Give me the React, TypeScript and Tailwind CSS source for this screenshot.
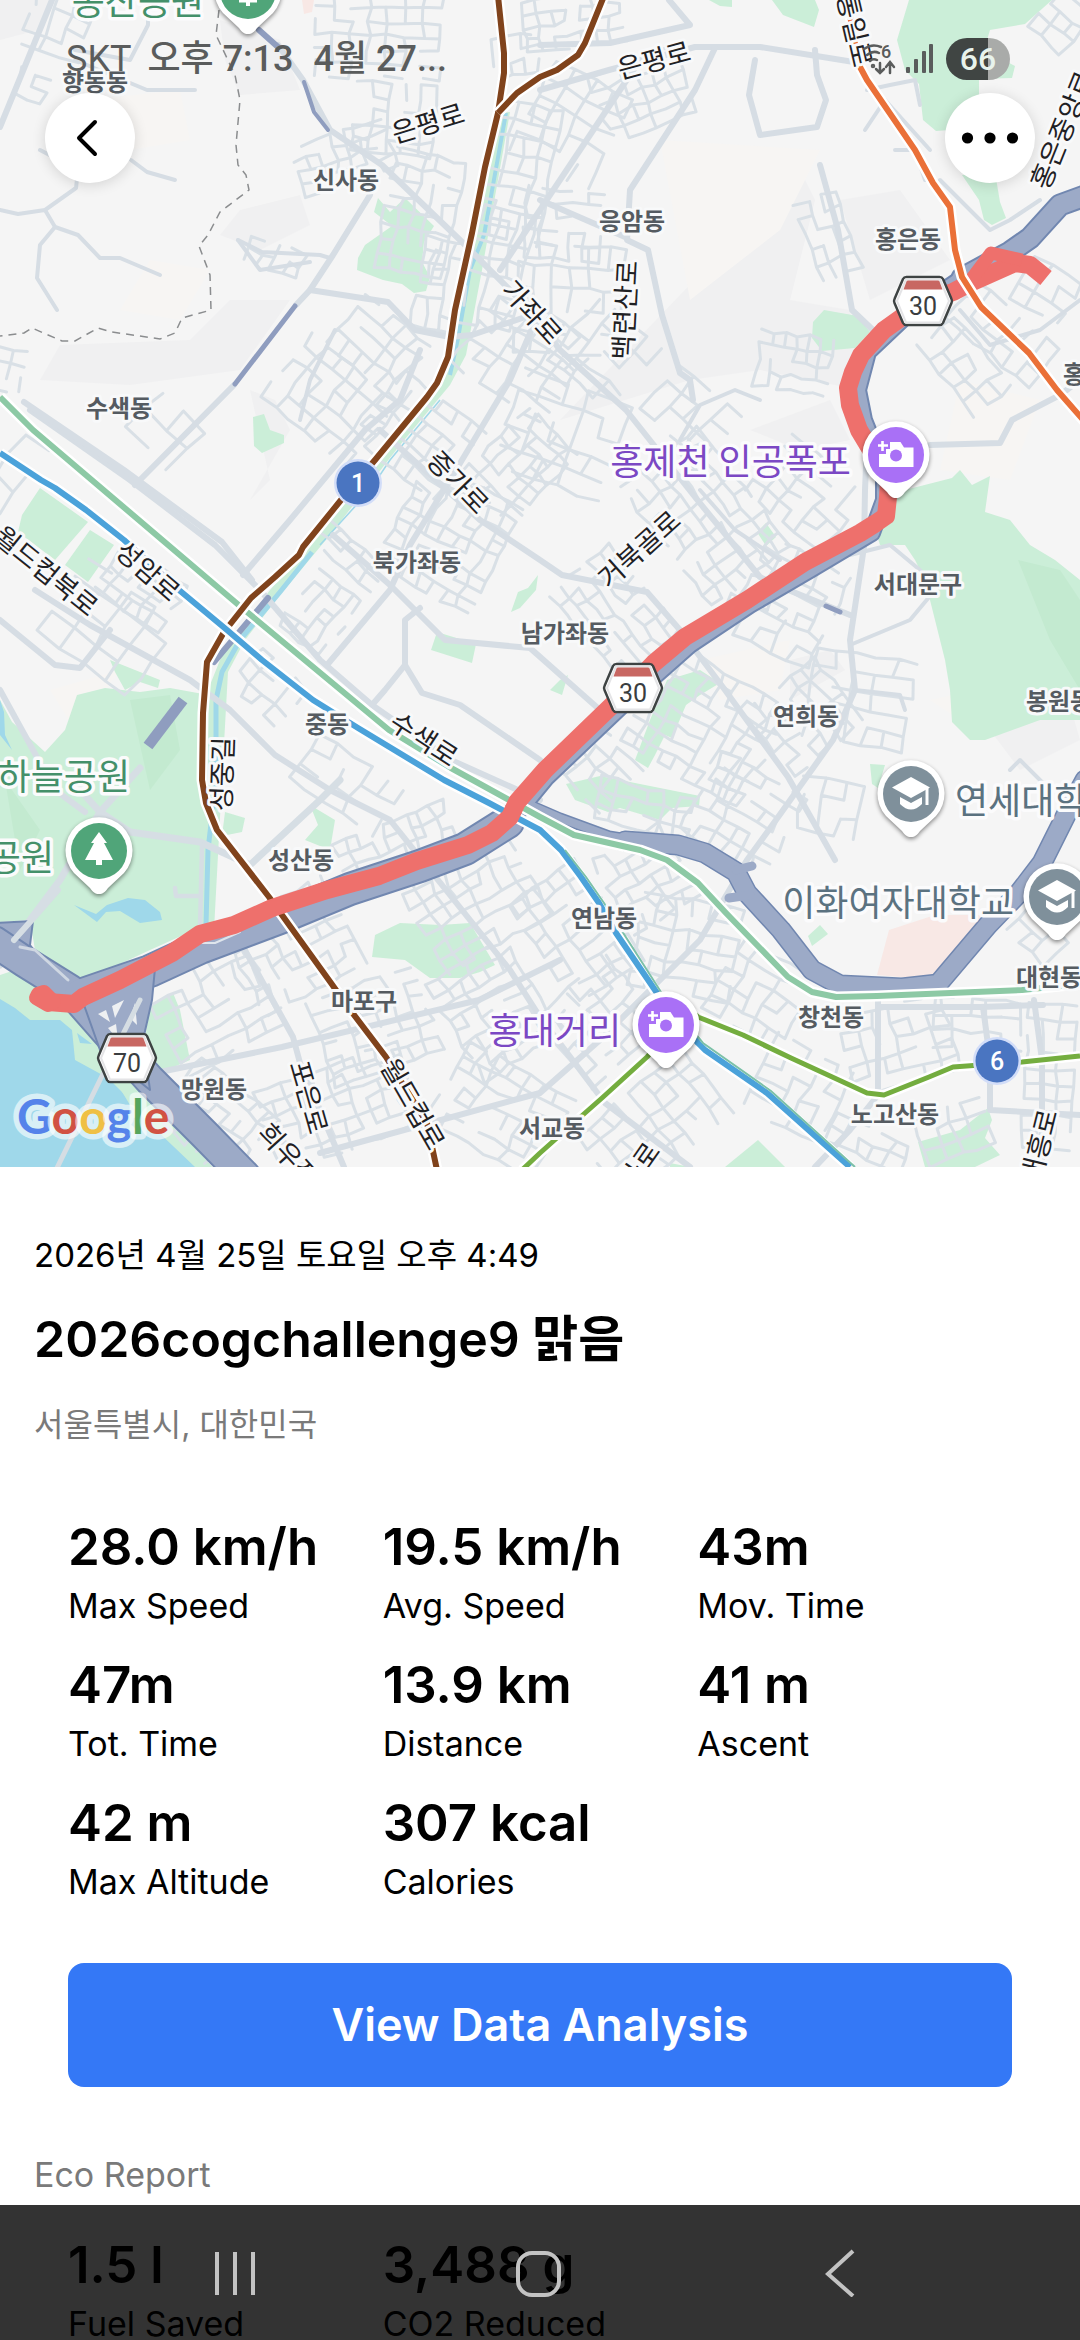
import type { ReactNode } from 'react';

type Point = { x: number; y: number };

const stats = [
  { value: '28.0 km/h', label: 'Max Speed' },
  { value: '19.5 km/h', label: 'Avg. Speed' },
  { value: '43m', label: 'Mov. Time' },
  { value: '47m', label: 'Tot. Time' },
  { value: '13.9 km', label: 'Distance' },
  { value: '41 m', label: 'Ascent' },
  { value: '42 m', label: 'Max Altitude' },
  { value: '307 kcal', label: 'Calories' },
];

const ecoStats = [
  { value: '1.5 l', label: 'Fuel Saved' },
  { value: '3,488 g', label: 'CO2 Reduced' },
];

// cx, cy, width, height, angle, column step, row step
const blocks = [
  [62, 30, 70, 60, 20, 20, 14],
  [35, 95, 44, 40, 25, 16, 14],
  [385, 30, 140, 100, 2, 18, 14],
  [350, 160, 110, 60, -18, 14, 13],
  [400, 120, 90, 70, 5, 16, 14],
  [420, 215, 70, 120, 12, 14, 15],
  [575, 25, 100, 60, -8, 14, 13],
  [520, 60, 50, 50, -10, 14, 13],
  [645, 100, 90, 80, -22, 15, 14],
  [570, 130, 90, 110, 28, 22, 20],
  [520, 180, 70, 150, 12, 16, 17],
  [565, 230, 80, 80, 4, 15, 14],
  [570, 300, 110, 110, 4, 18, 22],
  [500, 270, 60, 120, 12, 18, 17],
  [605, 360, 90, 90, 40, 20, 20],
  [520, 360, 110, 110, 35, 18, 16],
  [440, 290, 46, 100, 12, 14, 15],
  [380, 350, 90, 70, 40, 16, 16],
  [330, 400, 110, 80, 40, 18, 16],
  [15, 375, 40, 50, 8, 14, 14],
  [275, 262, 60, 34, 20, 14, 13],
  [830, 240, 44, 90, -20, 14, 16],
  [795, 365, 75, 60, 8, 12, 14],
  [1000, 340, 110, 60, 40, 18, 16],
  [1050, 300, 70, 60, 30, 18, 16],
  [1060, 30, 50, 60, 40, 14, 16],
  [960, 370, 90, 60, 50, 18, 16],
  [420, 440, 110, 90, 38, 17, 14],
  [450, 540, 110, 120, 28, 15, 13],
  [515, 470, 70, 110, 45, 14, 14],
  [345, 560, 80, 40, 40, 16, 14],
  [170, 440, 80, 60, 45, 30, 26],
  [320, 620, 60, 80, 38, 13, 14],
  [560, 440, 110, 110, 20, 22, 20],
  [690, 420, 90, 70, 42, 20, 20],
  [700, 520, 150, 110, 52, 15, 14],
  [620, 620, 130, 80, 50, 14, 13],
  [810, 500, 110, 80, 40, 16, 15],
  [800, 590, 100, 70, 28, 15, 14],
  [770, 640, 110, 50, 25, 20, 18],
  [860, 700, 100, 90, 10, 20, 18],
  [705, 730, 140, 120, 30, 15, 14],
  [800, 720, 80, 100, 50, 16, 15],
  [600, 770, 70, 60, 45, 16, 15],
  [110, 630, 120, 90, 36, 28, 22],
  [140, 590, 80, 60, 36, 13, 14],
  [20, 480, 50, 80, 38, 28, 26],
  [270, 690, 70, 50, 42, 16, 16],
  [350, 790, 110, 60, 35, 20, 18],
  [400, 850, 120, 60, -22, 13, 14],
  [215, 1010, 110, 100, -28, 18, 16],
  [300, 950, 120, 110, -28, 14, 14],
  [380, 1030, 120, 100, -20, 16, 15],
  [340, 1110, 150, 90, -20, 15, 14],
  [215, 1120, 100, 80, 40, 14, 13],
  [475, 900, 120, 110, -30, 15, 15],
  [500, 1010, 100, 120, -32, 15, 14],
  [500, 1110, 120, 90, 30, 17, 15],
  [580, 930, 90, 120, -35, 16, 15],
  [650, 880, 80, 90, -30, 15, 14],
  [690, 950, 110, 100, 10, 17, 16],
  [600, 1020, 100, 90, -42, 16, 15],
  [660, 1120, 150, 80, -40, 17, 16],
  [760, 1000, 90, 90, 30, 17, 16],
  [650, 815, 110, 50, 15, 16, 14],
  [745, 815, 100, 90, 30, 16, 15],
  [830, 810, 60, 60, 10, 20, 18],
  [800, 1090, 90, 80, 28, 17, 16],
  [900, 1050, 110, 90, -15, 18, 16],
  [980, 1030, 90, 60, 3, 17, 16],
  [1055, 1080, 60, 150, 3, 16, 16],
  [960, 1130, 80, 50, -20, 17, 16],
  [870, 1150, 90, 40, 25, 16, 15],
  [1050, 930, 60, 60, -45, 18, 17],
];

const majorRoads = [
  '52,0 0,127',
  '278,45 303,80 330,130 382,165 460,240 530,310 560,350 626,410 695,497 760,577 781,587 850,615',
  '370,195 333,255 310,290 296,305',
  '234,385 135,485',
  '310,290 388,302 415,330 450,337 472,335 540,312',
  '540,90 609,70 695,47 760,47 860,63',
  '540,45 610,43 690,25 669,0',
  '715,48 695,90 630,190 627,240 648,250 662,315 680,373 690,380 693,400',
  '755,60 749,95 760,135 817,127 826,100 817,75 815,50',
  '640,60 580,150 500,270',
  '540,200 625,237',
  '30,410 130,480 215,545 260,590 320,660 372,705 451,760 540,800',
  '24,402 124,470 222,542 252,580',
  '35,590 90,625 190,680 230,710 275,755 330,790 390,820 430,870 510,970 540,1017 605,1103 690,1167',
  '243,575 290,520 365,430 400,400 420,350',
  '327,665 390,590 410,545 450,480 510,380 540,310',
  '333,535 390,585 445,640 530,648 600,710',
  '372,705 385,690 405,665 405,620 420,608',
  '405,665 422,693 460,705 540,760',
  '380,430 480,520 540,560 562,575 647,592 680,630 725,690 788,777 835,860',
  '868,420 865,490 864,547 850,640 855,690 833,740 781,813 747,860 700,940 600,1040 540,1093 320,1153',
  '930,445 1000,443 1012,420 1060,395 1080,380',
  '241,943 293,1037 300,1063 344,1167',
  '155,1073 282,1047 479,1000 560,960',
  '878,1000 878,1095 850,1130 815,1167',
  '880,1007 980,1007 1043,1005',
  '983,1007 990,1060 990,1110 1080,1115',
  '1034,1000 1042,1060 1042,1167',
  '0,620 55,665 80,668 110,630',
  '0,690 55,790 85,812',
  '820,165 838,230 845,270 852,310 873,330',
];

const minorRoads = [
  '0,210 18,214 45,210 76,188 78,170 40,150',
  '45,210 55,227 78,235 100,258 120,258 160,275',
  '55,227 40,245 37,278 57,310',
  '131,160 147,172 175,180',
  '75,50 130,60 148,25 148,0',
  '75,60 147,90 195,90',
  '238,240 262,252 320,255 330,258',
  '238,240 260,270 310,262',
  '335,330 310,380 300,420',
  '867,90 890,85 915,80 920,105',
  '865,130 885,100 930,150',
  '895,150 915,150 925,180',
  '940,180 990,230 1010,220 1040,200',
  '960,310 990,345 1040,330 1080,300',
  '760,400 735,390 700,405 680,440',
  '700,490 735,530 780,560',
  '850,555 890,545 920,570 935,590 910,620 850,645',
  '855,690 900,695 905,710',
  '1010,770 1020,760 1050,790',
];

const labels = [
  { text: '향동동', x: 95, y: 82 },
  { text: '신사동', x: 346, y: 180 },
  { text: '응암동', x: 632, y: 221 },
  { text: '홍은동', x: 908, y: 239 },
  { text: '수색동', x: 119, y: 408 },
  { text: '북가좌동', x: 417, y: 562 },
  { text: '남가좌동', x: 565, y: 633 },
  { text: '중동', x: 327, y: 724 },
  { text: '서대문구', x: 918, y: 584 },
  { text: '연희동', x: 806, y: 716 },
  { text: '봉원동', x: 1059, y: 701 },
  { text: '홍제동', x: 1096, y: 374 },
  { text: '성산동', x: 301, y: 860 },
  { text: '마포구', x: 364, y: 1001 },
  { text: '망원동', x: 214, y: 1089 },
  { text: '연남동', x: 604, y: 918 },
  { text: '창천동', x: 831, y: 1017 },
  { text: '대현동', x: 1049, y: 977 },
  { text: '노고산동', x: 895, y: 1114 },
  { text: '서교동', x: 552, y: 1128 },
];

const roadNames = [
  { text: '은평로', x: 428, y: 123, angle: -17 },
  { text: '은평로', x: 654, y: 60, angle: -15 },
  { text: '통일로', x: 855, y: 30, angle: 77 },
  { text: '가좌로', x: 532, y: 312, angle: 48 },
  { text: '백련산로', x: 625, y: 310, angle: -87 },
  { text: '홍은중앙로', x: 1062, y: 130, angle: -68 },
  { text: '월드컵북로', x: 46, y: 571, angle: 39 },
  { text: '성암로', x: 148, y: 571, angle: 41 },
  { text: '증가로', x: 458, y: 482, angle: 46 },
  { text: '수색로', x: 424, y: 739, angle: 33 },
  { text: '성중길', x: 222, y: 774, angle: -88 },
  { text: '거북골로', x: 639, y: 549, angle: -42 },
  { text: '포은로', x: 309, y: 1097, angle: 74 },
  { text: '월드컵로', x: 413, y: 1104, angle: 60 },
  { text: '희우정로', x: 297, y: 1164, angle: 48 },
  { text: '대흥로', x: 1039, y: 1146, angle: -76 },
  { text: '양화로', x: 632, y: 1176, angle: -55 },
];

const places = [
  { text: '봉산공원', x: 138, y: 2, color: '#44906a', anchor: 'middle' },
  { text: '하늘공원', x: 130, y: 777, color: '#44906a', anchor: 'end' },
  { text: '노을공원', x: 54, y: 858, color: '#44906a', anchor: 'end' },
  { text: '홍제천 인공폭포', x: 851, y: 462, color: '#7b48c4', anchor: 'end' },
  { text: '홍대거리', x: 621, y: 1031, color: '#7b48c4', anchor: 'end' },
  { text: '연세대학교', x: 955, y: 801, color: '#5b7280', anchor: 'start' },
  { text: '이화여자대학교', x: 1014, y: 903, color: '#5b7280', anchor: 'end' },
] as const;

// Small deterministic generator, so every render gives the same side streets
const createRandom = (seed: number) => {
  let state = seed;
  return () => {
    state = (state * 16807) % 2147483647;
    return state / 2147483647;
  };
};

const streetPath = (w: number, h: number, stepX: number, stepY: number, seed: number) => {
  const random = createRandom(seed * 7919 + 17);
  const cols = Math.floor(w / stepX);
  const rows = Math.floor(h / stepY);
  const grid: Point[][] = [];
  for (let r = 0; r <= rows; r++) {
    const row: Point[] = [];
    for (let c = 0; c <= cols; c++) {
      row.push({
        x: Math.round(-w / 2 + c * stepX + (random() - 0.5) * 5),
        y: Math.round(-h / 2 + r * stepY + (random() - 0.5) * 4),
      });
    }
    grid.push(row);
  }
  let d = '';
  for (let r = 0; r <= rows; r++) {
    for (let c = 0; c <= cols; c++) {
      const p = grid[r][c];
      if (c < cols && random() > 0.24) d += `M${p.x} ${p.y}L${grid[r][c + 1].x} ${grid[r][c + 1].y}`;
      if (r < rows && random() > 0.34) d += `M${p.x} ${p.y}L${grid[r + 1][c].x} ${grid[r + 1][c].y}`;
    }
  }
  return d;
};

const Line = ({ points, color, width, casing = 5 }: { points: string; color: string; width: number; casing?: number }) => (
  <g fill="none" strokeLinejoin="round">
    {casing > 0 && <polyline points={points} stroke="#ffffff" strokeWidth={width + casing} />}
    <polyline points={points} stroke={color} strokeWidth={width} />
  </g>
);

const Pin = ({ x, y, color, children }: { x: number; y: number; color: string; children: ReactNode }) => (
  <g transform={`translate(${x} ${y})`}>
    <path
      d="M0 43C-4 43-6 41-9 37L-25 22A33.5 33.5 0 1 1 25 22L9 37C6 41 4 43 0 43Z"
      fill="#ffffff"
      className="drop-shadow-[0_2px_2px_rgba(0,0,0,0.45)]"
    />
    <circle r="28" fill={color} />
    {children}
  </g>
);

const CameraGlyph = () => (
  <g>
    <path d="M-17-1H-10V-6H-6V-13H4.500L8-7.500H17.500V12H-17Z" fill="#ffffff" />
    <path d="M-13.500-14V-4M-18-9.500H-8" stroke="#ffffff" strokeWidth="2.600" />
    <circle r="6" cy="0.500" fill="#a970f6" />
  </g>
);

const SchoolGlyph = () => (
  <g fill="#ffffff">
    <path d="M0-17L19-6.500L0 4L-19-6.500Z" />
    <path d="M-11 3L0 9L11 3V10Q0 21-11 10Z" />
    <path d="M14.500-7H17.500V11H14.500Z" />
  </g>
);

const Shield = ({ x, y, text }: { x: number; y: number; text: string }) => (
  <g transform={`translate(${x} ${y})`}>
    <path
      d="M-16.500-24H16.500Q19-24 20-22L28.500-2Q29.500 0 28.500 2L20 22Q19 24 16.500 24H-16.500Q-19 24-20 22L-28.500 2Q-29.500 0-28.500-2L-20-22Q-19-24-16.500-24Z"
      fill="#ffffff"
      stroke="#3e4343"
      strokeWidth="2.500"
    />
    <path d="M-17-21.500H17L26 0L17 21.500H-17L-26 0Z" fill="none" stroke="#e4e4e6" strokeWidth="2" />
    <path d="M-15-20.500H15Q16-20.500 16.500-19.500L19.500-11.500H-19.500L-16.500-19.500Q-16-20.500-15-20.500Z" fill="#c86762" />
    <text y="14" textAnchor="middle" className="text-[25px]" fill="#3a3d40">
      {text}
    </text>
  </g>
);

const RouteBadge = ({ x, y, text }: { x: number; y: number; text: string }) => (
  <g transform={`translate(${x} ${y})`}>
    <circle r="24" fill="#d2ddf8" />
    <circle r="21.500" fill="#4a75c1" />
    <text y="9" textAnchor="middle" className="text-[25px] font-medium" fill="#ffffff">
      {text}
    </text>
  </g>
);

const RideMap = () => (
  <svg
    viewBox="0 0 1080 1167"
    role="img"
    aria-label="Ride map"
    className="block w-full bg-[#f5f5f5] font-[Roboto,'Noto_Sans_CJK_KR',sans-serif]"
  >
    {/* Terrain */}
    <g fill="#f0f0f1">
      <path d="M0 0H50L38 30L0 40Z M225 60L240 95L300 90L280 40L220 20Z M240 210L300 195L310 225L260 250L220 235Z" />
      <path d="M40 380L60 345L190 340L230 300L290 300L240 370L130 385Z M560 420L800 170L815 200L790 300L850 310L860 390L760 370L690 380Z" />
      <path d="M840 200L900 190L950 260L870 300Z M790 250L720 280L725 320L760 370Z M250 390L275 400L290 430L250 500L270 480Z" />
      <path d="M960 690L1060 670L1080 740L1020 770Z M790 660L830 650L845 670L790 700Z M750 430L830 400L850 440L800 450Z" />
    </g>
    <g fill="#f7f5f3">
      <path d="M90 100L180 90L190 140L130 150Z M660 140L820 150L780 230L690 300Z M150 260L210 270L180 320L120 310Z M700 660L790 640L780 690L720 700Z" />
      <path d="M50 690L120 670L75 730Z M960 380L1040 400L1010 480L940 470Z M930 700L975 690L960 720Z" />
    </g>
    <path d="M302 0H314L312 12L304 14Z M889 930L935 915H985L960 975L935 980L877 975Z" fill="#f8e8e5" />

    {/* Parks */}
    <g fill="#cbeed8">
      <path d="M909 0H1052L1025 24L990 30L984 50L1015 66L1012 78L979 79V97L960 110L950 130L936 131L923 120L919 84L905 70L897 40Z" />
      <path d="M709 0H732V7L720 6Z M772 0H815L819 10L814 27L783 15Z M962 175L995 172L1000 202L1006 218L992 225L984 220L979 200Z" />
      <path d="M378 198L390 212L405 198L434 226L424 242L422 262L430 277L426 291L414 293L402 284L383 280L357 270L358 258L365 245L392 226L374 212Z" />
      <path d="M824 310L858 316L870 332L855 348L822 351L812 338L813 322Z M253 417L264 414L270 430L284 435V443L262 453L254 446Z" />
      <path d="M40 488L88 522L55 560L18 532L22 515Z M90 530L114 545L88 582L65 565Z" />
      <path d="M437 632L476 644L472 663L431 650Z M538 575L528 588L518 592L511 612L520 608L536 590Z" />
      <path d="M110 660L160 680L158 688L140 682L125 690L115 672Z M0 700L12 722L45 752L65 730L77 695L105 688L140 692L170 688L203 694V800L215 830L212 922L150 950L75 985L35 950L30 920L0 922Z" />
      <path d="M0 975L30 965L70 1005L110 1055L160 1110L212 1167H0Z M150 1005L173 993L180 1010L190 1060L160 1073L145 1040Z" />
      <path d="M225 812L245 818L242 832L222 836Z M310 805L335 820L330 850L305 840L318 825Z" />
      <path d="M375 935L400 923L440 925L470 923L495 965L480 972L460 978L430 978L405 960L372 957Z" />
      <path d="M757 532L766 523L776 537L766 546Z M667 680L700 670L720 683L700 695L686 705L672 738L665 735L655 755L648 768L635 760L650 720Z M560 680L568 675L562 695L550 690Z" />
      <path d="M871 515L905 490L952 478L960 470L972 485L990 476L985 512L1010 520L1030 545L1055 560L1080 580V720L1040 720L985 740H970L952 722L950 690L945 660L935 620L925 580L915 560L905 545L880 545Z" />
      <path d="M566 784L600 776L650 786L700 796L699 806L672 808L660 820L620 808L608 812L575 800Z M808 936L820 925L828 934L812 946Z M870 764L885 765L878 788L872 784Z" />
      <path d="M918 1142L960 1130L988 1108L992 1120L985 1138L1000 1155L975 1167H925Z M725 1167L758 1140L785 1167Z M670 1163L690 1167H670Z" />
      <path d="M497 113L510 112L482 270L466 355L450 385L400 445L330 535L280 595L245 640L228 672L222 780L214 930H206L208 690L222 655L270 590L340 510L440 375L460 310Z" />
    </g>
    <path d="M1018 560L1060 570L1080 600V690L1050 640Z M130 700L170 695L180 750L150 790Z M5 780L40 830L20 870Z" fill="#c3ead0" />

    {/* Water */}
    <g fill="#9fd8ea">
      <path d="M0 999L15 1008L30 1020L60 1020L72 1030L75 1060L108 1078L140 1110L210 1167H0Z" />
      <path d="M74 905L96 914L107 905L128 898L145 900L160 912L162 920L140 923L120 911L106 912L97 922Z M0 700L4 712L5 735L12 750L0 735Z" />
    </g>
    <path d="M72 1030L110 1072L130 1105L195 1167H212L150 1095L100 1035L78 1010Z" fill="#cbeed8" />
    <path d="M77 1033L92 1044L80 1043Z" fill="#9fd8ea" />
    <g fill="none" stroke="#9fd8e9">
      <polyline points="506,113 484,235 470,270 458,338 450,375" strokeWidth="4" />
      <polyline points="440,400 390,460 370,490 320,545" strokeWidth="1.500" />
      <polyline points="312,552 280,592 240,640 222,672 216,700 216,780 208,850 206,925" strokeWidth="5" />
    </g>

    {/* Streets */}
    <g fill="none" stroke="#d9e0e6" strokeWidth="3" strokeLinecap="round">
      {blocks.map(([cx, cy, w, h, angle, stepX, stepY], index) => (
        <path
          key={index}
          d={streetPath(w, h, stepX, stepY, index + 1)}
          transform={`translate(${cx} ${cy}) rotate(${angle})`}
        />
      ))}
    </g>
    <g fill="none" stroke="#d6dde4" strokeLinejoin="round" strokeLinecap="round">
      {minorRoads.map((points) => (
        <polyline key={points} points={points} strokeWidth="4" />
      ))}
      {majorRoads.map((points) => (
        <polyline key={points} points={points} strokeWidth="6" />
      ))}
      <g stroke="#d6dee4" strokeWidth="7">
        <polyline points="80,790 100,812 130,832 200,842 250,865 320,800 340,780" />
        <polyline points="140,768 100,812 60,880 15,940 0,965" />
        <polyline points="202,845 200,930" strokeWidth="4.500" />
        <polyline points="175,888 176,896 200,896" strokeWidth="4.500" />
      </g>
    </g>

    {/* City boundary */}
    <polyline
      points="219,10 216,35 235,75 240,100 236,145 238,165 246,175 249,190 220,212 208,235 199,246 210,275 211,310 182,318 175,333 160,339 112,332 98,328 75,341 62,341 32,328 24,333 0,336"
      fill="none"
      stroke="#8b8d8f"
      strokeWidth="1.500"
      strokeDasharray="8 6"
    />

    {/* Expressways */}
    <g fill="none" strokeLinejoin="round" strokeLinecap="round">
      <g stroke="#8f9dbf">
        <polyline points="259,30 278,47" strokeWidth="6" />
        <polyline points="304,82 314,112 328,130" strokeWidth="4" />
        <polyline points="295,306 235,384" strokeWidth="5" />
        <polyline points="183,700 148,746" strokeWidth="11" strokeLinecap="butt" />
        <polyline points="268,598 214,662" strokeWidth="6" />
        <polyline points="826,606 840,612" strokeWidth="5" />
      </g>
      <path d="M-4 923L33 921L30 945L60 985L20 970L-4 940Z" fill="#9caac7" stroke="#7187b0" strokeWidth="2" />
      <g stroke="#7187b0">
        <polyline points="-5,942 25,962 70,990 105,1030 150,1080 205,1135 245,1176" strokeWidth="33" />
        <polyline points="80,995 150,971 200,948 280,918 350,889 420,866 465,849 508,822" strokeWidth="34" />
        <polyline points="505,828 546,778 630,698 690,645 750,605 810,570 872,533 884,500 884,470 864,420 858,390 868,352 905,317 962,278" strokeWidth="18" />
        <polyline points="962,278 1010,252 1030,238 1060,205 1090,194" strokeWidth="23" />
        <polyline points="530,805 560,818 609,836 640,841" strokeWidth="11" />
        <polyline points="625,841 678,845 705,853 736,872 747,893 781,930 812,970 840,985 902,988 938,984 988,925 1019,893 1042,863 1066,815 1085,780" strokeWidth="21" />
      </g>
      <g stroke="#9caac7">
        <polyline points="-5,942 25,962 70,990 105,1030 150,1080 205,1135 245,1176" strokeWidth="29" />
        <polyline points="80,995 150,971 200,948 280,918 350,889 420,866 465,849 508,822" strokeWidth="30" />
        <polyline points="505,828 546,778 630,698 690,645 750,605 810,570 872,533 884,500 884,470 864,420 858,390 868,352 905,317 962,278" strokeWidth="14" />
        <polyline points="962,278 1010,252 1030,238 1060,205 1090,194" strokeWidth="19" />
        <polyline points="530,805 560,818 609,836 640,841" strokeWidth="8" />
        <polyline points="625,841 678,845 705,853 736,872 747,893 781,930 812,970 840,985 902,988 938,984 988,925 1019,893 1042,863 1066,815 1085,780" strokeWidth="18" />
        <polyline points="736,870 752,866" strokeWidth="9" />
        <polyline points="750,895 729,898" strokeWidth="9" />
      </g>
      <path d="M84 1005L155 968L152 1000L143 1040L150 1090L100 1050Z" fill="#9caac7" stroke="#7187b0" strokeWidth="2" />
      <path d="M98 1014L106 1010L110 1022Z M112 1006L124 1000L115 1018Z M135 1003L137 1025L130 1018Z M108 1028L116 1024L118 1040Z" fill="#eef0f2" />
      <polyline points="140,1000 100,1080 56,1170" stroke="#d5dde3" strokeWidth="5" />
      <polyline points="58,890 30,922 14,940" stroke="#d6dee4" strokeWidth="6" />
      <polyline points="20,947 35,950 68,980" stroke="#cfd7e2" strokeWidth="3" />
      <polyline points="196,943 215,943 240,932" stroke="#dfe5ec" strokeWidth="2" />
    </g>

    {/* Railways and subway lines */}
    <Line points="522,1170 540,1153 585,1113 602,1098 647,1057 690,1010 698,1017 743,1035 791,1058 867,1093 884,1095 929,1077 953,1067 1022,1062 1070,1057 1080,1056" color="#74ad3f" width={5} />
    <Line points="0,397 33,430 241,607 389,730 451,768 540,817 574,835 640,850 667,860 698,883 726,913 788,977 812,992 836,997 877,996 1022,990 1080,984" color="#8dc9a5" width={6} />
    <Line points="498,-4 504,53 504,73 498,113 485,167 472,233 455,310 448,357 437,383 427,397 375,460 341,500 303,547 299,555 275,577 251,598 224,632 207,662 203,713 202,780 206,803 217,830 269,897 331,983 348,1007 386,1057 427,1123 437,1170" color="#80431c" width={6} />
    <Line points="498,113 517,93 540,77 557,70 578,55 585,43 604,-4" color="#80431c" width={6} />
    <Line points="0,453 41,480 55,488 86,510 124,540 179,590 227,630 262,660 313,700 358,728 444,780 489,803 540,830 561,850 581,877 599,903 616,933 657,993 698,1043 705,1050 767,1093 850,1167" color="#4ba2da" width={6} />
    <polyline points="565,850 586,877 604,903 661,992 703,1043 771,1091 855,1167" fill="none" stroke="#7cc0a8" strokeWidth="2" />

    {/* Recorded route */}
    <g fill="none" stroke="#ee706c" strokeWidth="18" strokeLinejoin="round">
      <polyline
        points="48,1002 74,1004 83,997 120,980 172,953 200,934 234,925 272,908 327,890 379,876 417,861 468,845 492,833 510,817 517,802 545,770 602,715 630,688 654,663 685,637 747,600 805,562 860,533 876,523 886,516 888,497 889,480 871,450 859,430 850,405 848,388 853,372 861,355 884,330 905,315 922,302 953,292 970,283 1015,263 1030,265 1046,278"
      />
      <polyline points="967,285 991,253 1022,260" strokeWidth="13" />
      <path d="M36 998L38 994L44 992L54 1002L48 1005Z" fill="#ee706c" strokeWidth="14" />
    </g>
    <Line points="848,-4 852,30 860,67 867,80 915,150 933,183 950,207 955,250 962,277 981,307 1029,353 1057,390 1085,422" color="#ea7038" width={6} />

    {/* Names */}
    <g
      className="text-[24px] font-bold"
      fill="#555b61"
      stroke="#f8f9fa"
      strokeWidth="6"
      strokeLinejoin="round"
      paintOrder="stroke"
      textAnchor="middle"
    >
      {labels.map((label) => (
        <text key={label.text} x={label.x} y={label.y + 9}>
          {label.text}
        </text>
      ))}
    </g>
    <g
      className="text-[27px]"
      fill="#1f2124"
      stroke="#f8f9fa"
      strokeWidth="6"
      strokeLinejoin="round"
      paintOrder="stroke"
      textAnchor="middle"
    >
      {roadNames.map((road) => (
        <text key={`${road.text}-${road.x}`} y="10" transform={`translate(${road.x} ${road.y}) rotate(${road.angle})`}>
          {road.text}
        </text>
      ))}
    </g>
    <g className="text-[36px]" stroke="#fbfbfc" strokeWidth="7" strokeLinejoin="round" paintOrder="stroke">
      {places.map((place) => (
        <text key={place.text} x={place.x} y={place.y + 13} fill={place.color} textAnchor={place.anchor}>
          {place.text}
        </text>
      ))}
    </g>

    {/* Markers */}
    <Shield x={923} y={301} text="30" />
    <Shield x={633} y={688} text="30" />
    <Shield x={127} y={1058} text="70" />
    <RouteBadge x={358} y={483} text="1" />
    <RouteBadge x={997} y={1061} text="6" />
    <Pin x={248} y={-9} color="#50a579">
      <path d="M-9 8.500H9V11.500H-9Z M-2 5H2V15H-2Z" fill="#ffffff" />
    </Pin>
    <Pin x={99} y={851} color="#50a579">
      <path d="M0-19L8-8H5L14 9H3V14H-3V9H-14L-5-8H-8Z" fill="#ffffff" />
    </Pin>
    <Pin x={896} y={455} color="#a970f6">
      <CameraGlyph />
    </Pin>
    <Pin x={666} y={1025} color="#a970f6">
      <CameraGlyph />
    </Pin>
    <Pin x={911} y={794} color="#7f909b">
      <SchoolGlyph />
    </Pin>
    <Pin x={1057} y={897} color="#7f909b">
      <SchoolGlyph />
    </Pin>

    <text
      x="17"
      y="1134"
      className="font-[Lato,sans-serif] text-[48px] font-bold"
      stroke="#ffffff"
      strokeOpacity="0.6"
      strokeWidth="11"
      strokeLinejoin="round"
      paintOrder="stroke"
    >
      <tspan fill="#5583ea">G</tspan>
      <tspan fill="#d15243">o</tspan>
      <tspan fill="#efc045">o</tspan>
      <tspan fill="#5583ea">g</tspan>
      <tspan fill="#57a55d">l</tspan>
      <tspan fill="#d15243">e</tspan>
    </text>
  </svg>
);

const StatusBar = () => (
  <div className="flex items-center justify-between pl-[66px] pr-[70px] pt-9 font-[Roboto,'Noto_Sans_CJK_KR',sans-serif] text-[36px] font-medium leading-[46px] text-[#5a5c5c]">
    <div className="flex items-center">
      <span className="font-normal">SKT</span>
      <span className="ml-4">오후 7:13</span>
      <span className="ml-5">4월 27...</span>
    </div>
    <div className="flex items-center gap-2">
      <svg viewBox="0 0 36 34" className="h-[34px] w-9" fill="none" stroke="currentColor" strokeWidth="2.500" strokeLinecap="round">
        <path d="M2 7Q10 1 19 5M5 13Q11 8 17 11M8 19Q11 16 15 18" />
        <circle cx="11" cy="24" r="1" />
        <path d="M18 21V30M14 27L18 31L22 27M28 31V21M24 25L28 20L32 25" />
        <text x="19" y="16" stroke="none" fill="currentColor" className="text-[18px] font-medium">
          6
        </text>
      </svg>
      <svg viewBox="0 0 28 30" className="h-[30px] w-7" fill="currentColor">
        <rect x="0" y="23" width="4" height="6" rx="1" />
        <rect x="8" y="15" width="4" height="14" rx="1" />
        <rect x="16" y="7" width="4" height="22" rx="1" />
        <rect x="23" y="0" width="4" height="29" rx="1" />
      </svg>
      <span className="ml-1 flex h-[42px] w-16 items-center justify-center rounded-full bg-linear-to-r from-[#404543] from-65% to-[#a9aba9] to-65% text-[32px] text-[#e8f3ec]">
        66
      </span>
    </div>
  </div>
);

const RoundButton = ({ label, children }: { label: string; children: ReactNode }) => (
  <button
    type="button"
    aria-label={label}
    className="flex size-[90px] items-center justify-center rounded-full bg-white shadow-[0_2px_14px_rgba(0,0,0,0.14)]"
  >
    {children}
  </button>
);

const StatGrid = ({ items }: { items: { value: string; label: string }[] }) => (
  <dl className="grid grid-cols-3 gap-y-5">
    {items.map((item) => (
      <div key={item.label} className="flex flex-col-reverse">
        <dt className="text-[34px] leading-[50px]">{item.label}</dt>
        <dd className="text-[51px] font-semibold leading-[68px]">{item.value}</dd>
      </div>
    ))}
  </dl>
);

const NavigationBar = () => (
  <nav className="absolute inset-x-0 bottom-0 flex h-[135px] items-center justify-between bg-black/80 pl-[211px] pr-[216px] text-[#c3c3c3]">
    <button type="button" aria-label="Recents">
      <svg viewBox="0 0 48 48" className="size-12" fill="none" stroke="currentColor" strokeWidth="4">
        <path d="M6 3V46M24 3V46M42 3V46" />
      </svg>
    </button>
    <button type="button" aria-label="Home">
      <svg viewBox="0 0 48 48" className="size-12" fill="none" stroke="currentColor" strokeWidth="4">
        <rect x="4" y="4" width="41" height="42" rx="14" />
      </svg>
    </button>
    <button type="button" aria-label="Back">
      <svg viewBox="0 0 48 48" className="size-12" fill="none" stroke="currentColor" strokeWidth="4">
        <path d="M37 2L12 25L37 47" />
      </svg>
    </button>
  </nav>
);

export default function App() {
  return (
    <div className="relative h-screen overflow-hidden bg-white font-[Inter,'Noto_Sans_CJK_KR',sans-serif] text-black">
      <header className="absolute inset-x-0 top-0 z-10">
        <StatusBar />
        <div className="flex justify-between px-[45px] pt-[11px]">
          <RoundButton label="Back">
            <svg viewBox="0 0 40 40" className="size-10" fill="none" stroke="currentColor" strokeWidth="4" strokeLinecap="round" strokeLinejoin="round">
              <path d="M25 4L9 20L25 36" />
            </svg>
          </RoundButton>
          <RoundButton label="More options">
            <svg viewBox="0 0 60 12" className="h-3 w-[60px]" fill="currentColor">
              <circle cx="7.500" cy="6" r="5.600" />
              <circle cx="30" cy="6" r="5.600" />
              <circle cx="52.500" cy="6" r="5.600" />
            </svg>
          </RoundButton>
        </div>
      </header>

      <RideMap />

      <main className="px-[34px] pt-16">
        <p className="text-[33px] leading-[48px]">2026년 4월 25일 토요일 오후 4:49</p>
        <h1 className="mt-7 text-[50px] font-semibold leading-[64px]">2026cogchallenge9 맑음</h1>
        <p className="mt-[30px] text-[32px] leading-[48px] text-[#7a7a7a]">서울특별시, 대한민국</p>

        <section className="mt-16 px-[34px]">
          <StatGrid items={stats} />
          <button
            type="button"
            className="mt-14 flex h-[124px] w-full items-center justify-center rounded-2xl bg-[#3478f6] text-[45px] font-semibold text-white"
          >
            View Data Analysis
          </button>
        </section>

        <section>
          <h2 className="mt-16 text-[34px] leading-[48px] text-[#7a7a7a]">Eco Report</h2>
          <div className="mt-8 px-[34px]">
            <StatGrid items={ecoStats} />
          </div>
        </section>
      </main>

      <NavigationBar />
    </div>
  );
}
